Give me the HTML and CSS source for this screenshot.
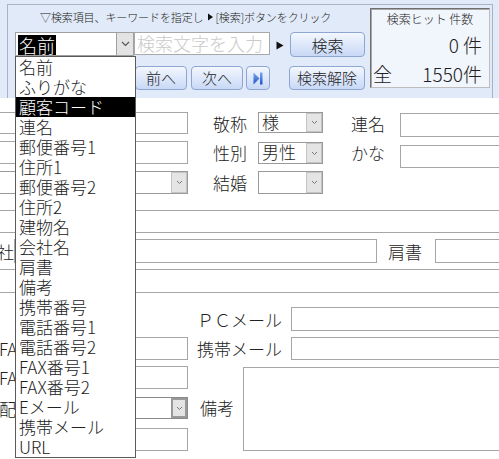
FILE: index.html
```html
<!DOCTYPE html>
<html lang="ja">
<head>
<meta charset="utf-8">
<title>顧客検索</title>
<link rel="stylesheet" href="styles.css">
</head>
<body>
<div class="panel">
  <div class="frame">
    <div class="controls">
      <div class="hint">▽検索項目、キーワードを指定し<svg class="hint-tri" width="7" height="8" viewBox="0 0 7 8"><polygon points="1,0.5 6,4 1,7.5" fill="#111"/></svg>[検索]ボタンをクリック</div>
      <div class="ctl-row row2">
        <div class="msel">
          <span class="msel-v"><span class="hl">名前</span></span>
          <span class="msel-b"><svg width="9" height="6" viewBox="0 0 9 6"><polyline points="1,1 4.5,4.5 8,1" fill="none" stroke="#555" stroke-width="1.1"/></svg></span>
        </div>
        <div class="kw">検索文字を入力</div>
        <svg class="go-tri" width="8" height="9" viewBox="0 0 8 9"><polygon points="0.5,0.5 7.5,4.5 0.5,8.5" fill="#111"/></svg>
        <button class="btn b-search">検索</button>
      </div>
      <div class="ctl-row row3">
        <button class="btn b-prev">前へ</button>
        <button class="btn b-next">次へ</button>
        <button class="btn b-last"><svg width="10" height="13" viewBox="0 0 10 13"><defs><linearGradient id="bl" x1="0" y1="0" x2="0" y2="1"><stop offset="0" stop-color="#7fa6f0"/><stop offset="1" stop-color="#1d55c8"/></linearGradient></defs><polygon points="0.5,0.5 6.5,6.5 0.5,12.5" fill="url(#bl)"/><rect x="7" y="0.5" width="2.5" height="12" fill="url(#bl)"/></svg></button>
        <button class="btn b-clear">検索解除</button>
      </div>
    </div>
    <div class="hits">
      <div class="hits-title">検索ヒット 件数</div>
      <div class="hits-now">0 件</div>
      <div class="hits-all"><span>全</span><span>1550件</span></div>
    </div>
  </div>
</div>

<div class="form">
  <div class="row r1">
    <div class="box lw"></div>
    <div class="lbl l-mid">敬称</div>
    <div class="fsel s-mid s1"><span class="fsel-v">様</span><span class="fsel-b"><svg width="7" height="5" viewBox="0 0 7 5"><polyline points="1,1 3.5,3.5 6,1" fill="none" stroke="#777" stroke-width="1"/></svg></span></div>
    <div class="lbl l-right">連名</div>
    <div class="box rw rw1"></div>
  </div>
  <div class="row r2">
    <div class="box lw"></div>
    <div class="lbl l-mid">性別</div>
    <div class="fsel s-mid s2"><span class="fsel-v">男性</span><span class="fsel-b"><svg width="7" height="5" viewBox="0 0 7 5"><polyline points="1,1 3.5,3.5 6,1" fill="none" stroke="#777" stroke-width="1"/></svg></span></div>
    <div class="lbl l-right">かな</div>
    <div class="box rw rw2"></div>
  </div>
  <div class="row r3">
    <div class="fsel lw"><span class="fsel-v"></span><span class="fsel-b"><svg width="7" height="5" viewBox="0 0 7 5"><polyline points="1,1 3.5,3.5 6,1" fill="none" stroke="#777" stroke-width="1"/></svg></span></div>
    <div class="lbl l-mid">結婚</div>
    <div class="fsel s-mid"><span class="fsel-v"></span><span class="fsel-b"><svg width="7" height="5" viewBox="0 0 7 5"><polyline points="1,1 3.5,3.5 6,1" fill="none" stroke="#777" stroke-width="1"/></svg></span></div>
  </div>
  <div class="row r4">
    <div class="box wide"></div>
  </div>
  <div class="row r5">
    <div class="lbl l-co">会社</div>
    <div class="box co"></div>
    <div class="lbl l-title">肩書</div>
    <div class="box title-in"></div>
  </div>
  <div class="row r6">
    <div class="box wide"></div>
  </div>
  <div class="row r7">
    <div class="lbl l-mail">ＰＣメール</div>
    <div class="box mail"></div>
  </div>
  <div class="row r8">
    <div class="lbl l-left">FAX番号1</div>
    <div class="box lbox"></div>
    <div class="lbl l-mail2">携帯メール</div>
    <div class="box mail"></div>
  </div>
  <div class="blk">
    <div class="lcol">
      <div class="lrow la">
        <div class="lbl l-left">FAX番号2</div>
        <div class="box lbox"></div>
      </div>
      <div class="lrow lb">
        <div class="lbl l-left">配布区分</div>
        <div class="fsel lbox focus"><span class="fsel-v"></span><span class="fsel-b"><svg width="7" height="5" viewBox="0 0 7 5"><polyline points="1,1 3.5,3.5 6,1" fill="none" stroke="#777" stroke-width="1"/></svg></span></div>
      </div>
      <div class="lrow lc">
        <div class="box lbox"></div>
      </div>
    </div>
    <div class="lbl l-note">備考</div>
    <div class="box note"></div>
  </div>
</div>

<ul class="dropdown">
  <li>名前</li>
  <li>ふりがな</li>
  <li class="on">顧客コード</li>
  <li>連名</li>
  <li>郵便番号1</li>
  <li>住所1</li>
  <li>郵便番号2</li>
  <li>住所2</li>
  <li>建物名</li>
  <li>会社名</li>
  <li>肩書</li>
  <li>備考</li>
  <li>携帯番号</li>
  <li>電話番号1</li>
  <li>電話番号2</li>
  <li>FAX番号1</li>
  <li>FAX番号2</li>
  <li>Eメール</li>
  <li>携帯メール</li>
  <li>URL</li>
</ul>
</body>
</html>
```

FILE: styles.css
```css
* { box-sizing: border-box; }
html, body { margin: 0; padding: 0; }
body {
  width: 499px;
  height: 459px;
  overflow: hidden;
  position: relative;
  background: #fff;
  color: #222;
  font-family: "Noto Sans CJK JP", "Noto Sans", sans-serif;
  font-weight: 300;
}

/* ---------- search panel ---------- */
.panel {
  height: 98px;
  background: #e1eaf8;
  padding: 4px 6px 0 7px;
}
.frame {
  height: 94px;
  border: 1px solid #a9b3c4;
  border-bottom: none;
  display: flex;
}
.controls { width: 357px; }
.hint {
  margin-top: 5px;
  padding-left: 32px;
  height: 14px;
  font-size: 11px;
  line-height: 14px;
  white-space: nowrap;
  display: flex;
  align-items: center;
  letter-spacing: -0.1px;
}
.hint-tri { margin: 0 2px 0 3px; }

.ctl-row { display: flex; align-items: flex-start; height: 24px; }
.row2 { margin-top: 8px; }
.row3 { margin-top: 10px; }

.msel {
  margin-left: 7px;
  width: 119px;
  height: 24px;
  border: 1px solid #a0a0a0;
  background: #fff;
  display: flex;
}
.msel-v { flex: 1; padding: 1px 0 0 2px; }
.hl {
  display: inline-block;
  background: #000;
  color: #fff;
  font-size: 18px;
  line-height: 20px;
  height: 20px;
  padding: 0 1px;
}
.msel-b {
  width: 17px;
  background: #e3e3e3;
  border-left: 1px solid #a0a0a0;
  display: flex;
  align-items: center;
  justify-content: center;
}
.kw {
  width: 136px;
  height: 23px;
  border: 1px solid #a8a8a8;
  background: #fff;
  font-size: 18px;
  line-height: 21px;
  color: #cacaca;
  padding-left: 2px;
  white-space: nowrap;
  overflow: hidden;
}
.go-tri { margin: 9px 0 0 6px; }

.btn {
  font-family: "Noto Sans CJK JP", "Noto Sans", sans-serif;
  font-weight: 300;
  font-size: 15px;
  line-height: 20px;
  color: #222;
  padding: 0;
  height: 24px;
  border: 1px solid #8fa6d2;
  border-radius: 4px;
  background: linear-gradient(#f3f7fe, #dbe6fa 55%, #c8d8f5);
  display: flex;
  align-items: center;
  justify-content: center;
}
.b-search { margin-left: 6px; width: 75px; height: 25px; font-size: 16px; }
.b-prev { margin-left: 127px; width: 52px; }
.b-next { margin-left: 4px; width: 52px; }
.b-last { margin-left: 3px; width: 24px; }
.b-clear { margin-left: 19px; width: 76px; }

.hits {
  margin: 3px 0 0 5px;
  width: 120px;
  height: 80px;
  background: #f1f5fc;
  border: 1px solid;
  border-color: #6f6f6f #bdbdbd #bdbdbd #6f6f6f;
  box-shadow: inset 1px 1px 0 #a8a8a8;
  padding: 2px 7px 0 2px;
}
.hits-title {
  font-size: 12px;
  line-height: 16px;
  text-align: center;
  padding-left: 5px;
}
.hits-now {
  margin-top: 5px;
  font-size: 19px;
  line-height: 26px;
  text-align: right;
}
.hits-all {
  margin-top: 3px;
  font-size: 19px;
  line-height: 26px;
  display: flex;
  justify-content: space-between;
}

/* ---------- form ---------- */
.form {
  height: 361px;
  overflow: hidden;
}
.row { display: flex; align-items: flex-start; }
.box {
  border: 1px solid #a6a6a6;
  background: #fff;
  flex-shrink: 0;
}
.lbl {
  font-size: 17px;
  height: 100%;
  display: flex;
  align-items: center;
  white-space: nowrap;
  flex-shrink: 0;
  overflow: hidden;
}
.fsel {
  border: 1px solid #9a9a9a;
  background: #fff;
  display: flex;
  flex-shrink: 0;
  height: 100%;
}
.fsel-v {
  flex: 1;
  font-size: 17px;
  line-height: 18px;
  padding-left: 3px;
  white-space: nowrap;
}
.fsel-b {
  width: 16px;
  background: #e4e4e4;
  border: 1px solid #c4c4c4;
  display: flex;
  align-items: center;
  justify-content: center;
}
.fsel.focus { border-color: #8a8a8a; }
.fsel.focus .fsel-b { border: 2px solid #999; }

.r1 { margin-top: 14px; height: 22px; }
.r2 { margin-top: 7px; height: 23px; }
.r3 { margin-top: 7px; height: 23px; }
.r4 { margin-top: 16px; height: 23px; }
.r5 { margin-top: 6px; height: 24px; }
.r6 { margin-top: 6px; height: 24px; }
.r7 { margin-top: 14px; height: 24px; }
.r8 { margin-top: 6px; height: 23px; }

.lw { margin-left: -10px; width: 198px; height: 100%; }
.l-mid { margin-left: 25px; width: 35px; }
.s-mid { margin-left: 10px; width: 65px; }
.s1 { height: 21px; }
.s2 { margin-top: 1px; height: 22px; }
.l-right { margin-left: 28px; width: 37px; }
.rw { margin-left: 12px; width: 120px; }
.rw1 { margin-top: 1px; height: 24px; }
.rw2 { margin-top: 4px; height: 23px; }

.wide { margin-left: -10px; width: 520px; height: 100%; }

.l-co { margin-left: -20px; width: 34px; justify-content: flex-end; }
.co { width: 363px; height: 100%; }
.l-title { margin-left: 11px; width: 37px; }
.title-in { margin-left: 10px; width: 80px; height: 100%; }

.l-mail { margin-left: 197px; width: 85px; }
.l-mail2 { margin-left: 9px; width: 85px; }
.mail { margin-left: 9px; width: 220px; height: 100%; }

/* left labels: only their first letters show beside the open list */
.l-left { margin-left: -1px; width: 16px; justify-content: flex-start; }
.lbox { margin-left: 45px; width: 128px; height: 100%; }

.blk { display: flex; margin-top: 6px; height: 86px; }
.lcol { width: 188px; flex-shrink: 0; }
.lrow { display: flex; }
.la { height: 23px; }
.lb { margin-top: 8px; height: 22px; }
.lc { margin-top: 9px; height: 23px; padding-left: 15px; }
.l-note { margin-left: 12px; width: 37px; height: auto; align-self: center; margin-top: -4px; }
.note { margin-left: 6px; margin-top: 1px; width: 270px; height: 84px; }

/* ---------- dropdown (open select list) ---------- */
.dropdown {
  position: absolute;
  left: 15px;
  top: 56px;
  width: 121px;
  height: 402px;
  margin: 0;
  padding: 0;
  list-style: none;
  background: #fff;
  border: 1px solid #5a5a5a;
  z-index: 5;
}
.dropdown li {
  height: 20px;
  line-height: 20px;
  font-size: 17px;
  padding-left: 3px;
  white-space: nowrap;
}
.dropdown li.on { background: #000; color: #fff; }
```
